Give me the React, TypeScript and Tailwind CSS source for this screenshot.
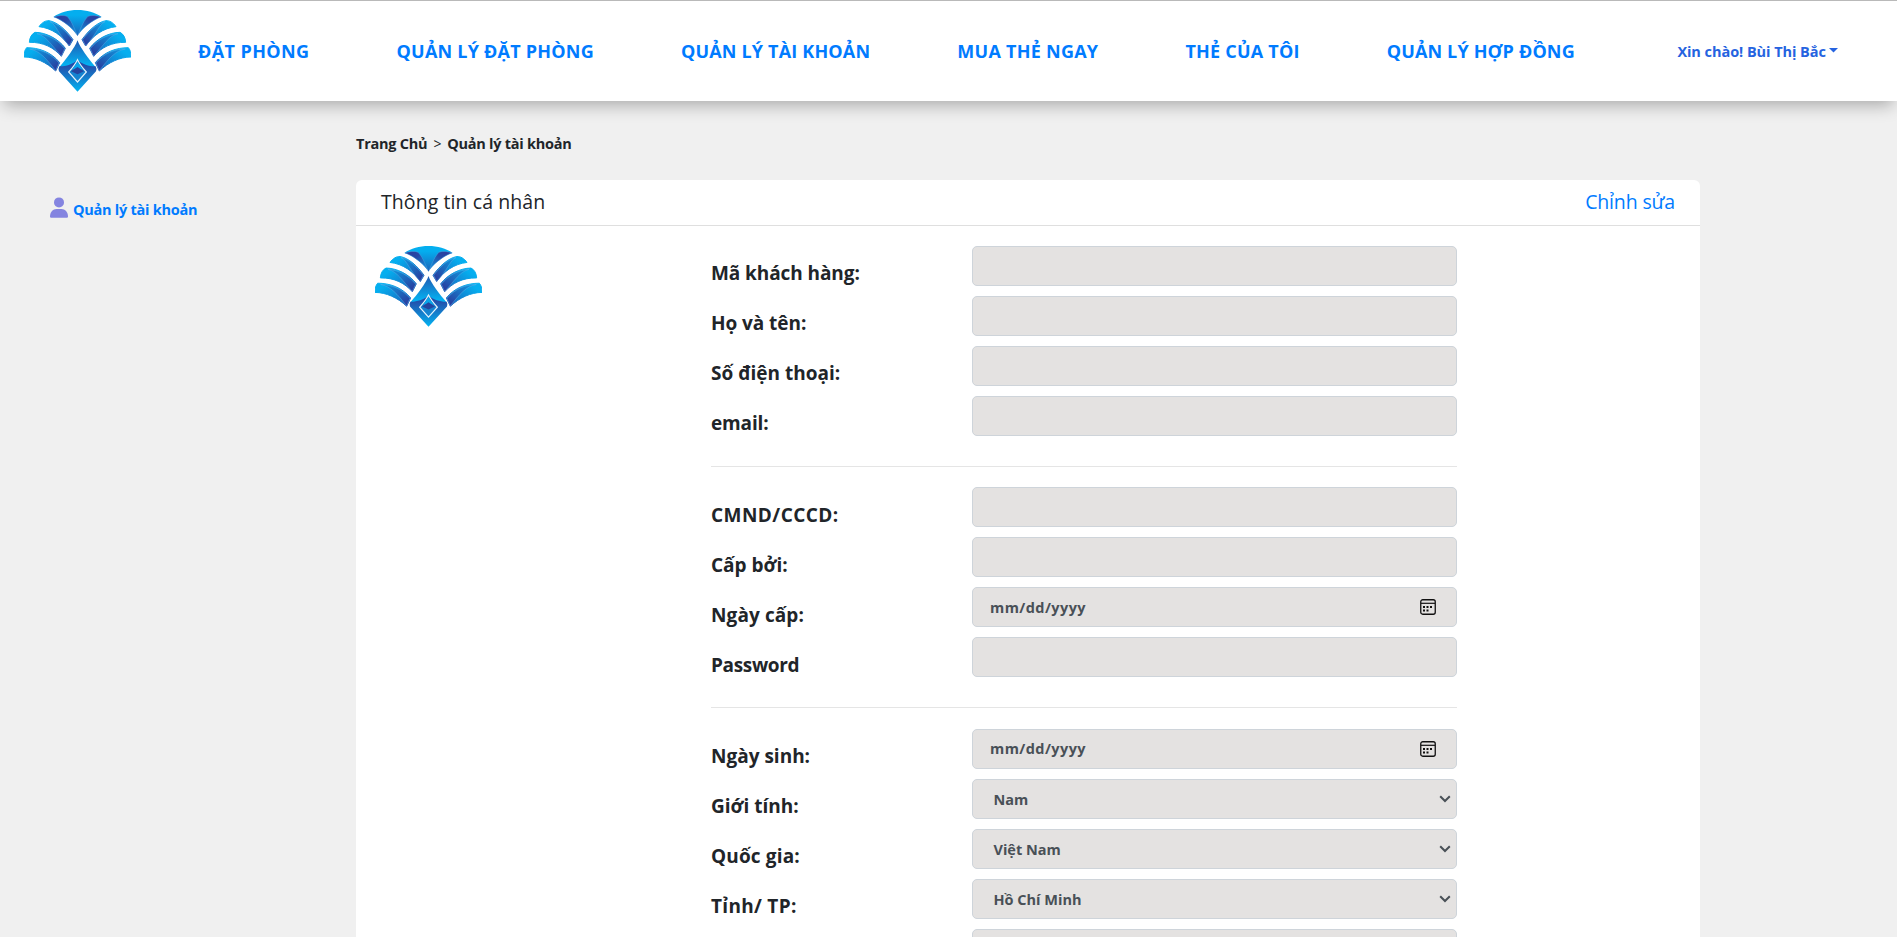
import clsx from "clsx";

const BLADES = [
  "M72 80 C80 68 92 61 102 62 C128 66 155 92 174 119 L163 138 C142 107 110 84 72 80Z",
  "M43 127 C44 112 50 102 60 97 C92 97 130 116 151 145 L139 169 C117 143 85 126 43 127Z",
  "M27 171 C27 158 29 150 35 143 C70 143 108 155 134 188 L122 213 C95 187 60 171 27 171Z",
];

const BLADE_SHADES = [
  "M105 65 C124 74 130 104 163 137 L172 119 C152 92 128 70 105 65Z",
  "M66 101 C94 108 108 134 139 168 L149 146 C128 119 98 103 66 101Z",
  "M44 147 C74 152 94 176 122 212 L132 189 C108 160 76 147 44 147Z",
];

function Wing() {
  return (
    <g>
      <path
        d="M117 51 C130 46 148 45 156 49 C167 60 177 80 185 103 C172 84 143 60 117 51Z"
        fill="url(#indigo)"
        stroke="#5fa6e2"
        strokeWidth="1.2"
      />
      {BLADES.map((d) => (
        <path key={d} d={d} fill="url(#blade)" stroke="url(#blade)" strokeWidth="3" strokeLinejoin="round" />
      ))}
      {BLADE_SHADES.map((d) => (
        <path key={d} d={d} fill="url(#shade)" stroke="#6db4ea" strokeWidth="1.2" />
      ))}
    </g>
  );
}

function Logo({ height = 82 }: { height?: number }) {
  return (
    <svg
      width="107"
      height={height}
      viewBox="27 30 321 246"
      preserveAspectRatio="none"
      className="shrink-0"
      aria-hidden="true"
    >
      <defs>
        <linearGradient id="crown" x1="0" y1="0" x2="0" y2="1">
          <stop offset="0.2" stopColor="#04aeef" />
          <stop offset="1" stopColor="#1b63b9" />
        </linearGradient>
        <linearGradient id="indigo" x1="0" y1="0" x2="1" y2="1">
          <stop offset="0" stopColor="#2c3a9b" />
          <stop offset="0.4" stopColor="#2648a6" />
          <stop offset="0.8" stopColor="#1581cf" />
        </linearGradient>
        <linearGradient id="blade" x1="0" y1="0" x2="1" y2="0.9">
          <stop offset="0.2" stopColor="#05aeef" />
          <stop offset="1" stopColor="#1d5fb8" />
        </linearGradient>
        <linearGradient id="shade" x1="0" y1="0" x2="0.9" y2="1">
          <stop offset="0" stopColor="#0b9ce2" />
          <stop offset="0.5" stopColor="#1b6dc0" />
          <stop offset="1" stopColor="#2a389b" />
        </linearGradient>
        <linearGradient id="peak" x1="0" y1="0" x2="0" y2="1">
          <stop offset="0" stopColor="#2059b2" />
          <stop offset="0.6" stopColor="#05aeef" />
        </linearGradient>
        <linearGradient id="base" x1="0" y1="0" x2="0" y2="1">
          <stop offset="0.1" stopColor="#2745a4" />
          <stop offset="1" stopColor="#02b4f2" />
        </linearGradient>
      </defs>
      <path
        d="M115 51 C135 37 160 30 187.500 30 C215 30 240 37 260 51 C232 60 200 85 187.500 108 C175 85 143 60 115 51Z"
        fill="url(#crown)"
      />
      <Wing />
      <g transform="translate(375 0) scale(-1 1)">
        <Wing />
      </g>
      <path d="M187.500 121 C195 143 222 178 241 200 L187.500 240 L134 200 C153 178 180 143 187.500 121Z" fill="url(#peak)" />
      <path
        d="M133 199 C150 200 173 193 187.500 180 C202 193 225 200 242 199 Q246 206 243 214 L187.500 275 L132 214 Q129 206 133 199Z"
        fill="url(#base)"
      />
      <path
        d="M187.500 179 C194 193 204 205 214 216 L187.500 246 L161 216 C171 205 181 193 187.500 179Z"
        fill="#1583d0"
        stroke="#e4f3fc"
        strokeWidth="3.500"
      />
      <path d="M187.500 185 L203 208 L172 208Z" fill="#08a5ea" />
      <path d="M187.500 201 L207 214 L187.500 223 L168 214Z" fill="#25459f" />
    </svg>
  );
}

const NAV = [
  { label: "ĐẶT PHÒNG", tracking: "tracking-[0.4px]" },
  { label: "QUẢN LÝ ĐẶT PHÒNG", tracking: "tracking-[0.22px]" },
  { label: "QUẢN LÝ TÀI KHOẢN", tracking: "tracking-[0.18px]" },
  { label: "MUA THẺ NGAY", tracking: "tracking-[0.26px]" },
  { label: "THẺ CỦA TÔI", tracking: "tracking-[0.22px]" },
  { label: "QUẢN LÝ HỢP ĐỒNG", tracking: "tracking-[0.16px]" },
];

function Header() {
  return (
    <header className="flex h-[101px] items-center border-t border-[#b9b9b9] bg-white pl-6 shadow-[0_8px_16px_-4px_rgba(0,0,0,0.3)]">
      <Logo />
      <nav className="ml-[67px] flex gap-[87px] text-[18px] leading-6 font-bold whitespace-nowrap text-[#007bff]">
        {NAV.map((item) => (
          <a key={item.label} href="#" className={item.tracking}>
            {item.label}
          </a>
        ))}
      </nav>
      <button className="ml-[102.5px] flex items-center gap-[3px] pt-0.5 text-[14.5px] leading-6 font-bold tracking-[-0.05px] whitespace-nowrap text-[#2563e0]">
        Xin chào! Bùi Thị Bắc
        <svg width="9" height="5" viewBox="0 0 9 5" className="mb-1" fill="currentColor" aria-hidden="true">
          <path d="M0 0H9L4.500 4.500Z" />
        </svg>
      </button>
    </header>
  );
}

function PersonIcon() {
  return (
    <svg width="18" height="21" viewBox="0 0 18 21" fill="#8484e0" aria-hidden="true">
      <circle cx="9" cy="5.400" r="5" />
      <path d="M0 19.500C0 15 3 12 6.500 12H11.500C15 12 18 15 18 19.500Q18 20.700 16.800 20.700H1.200Q0 20.700 0 19.500Z" />
    </svg>
  );
}

function CalendarIcon() {
  return (
    <svg width="16" height="16" viewBox="0 0 16 16" fill="none" aria-hidden="true">
      <rect x="0.750" y="0.750" width="14.500" height="14.500" rx="2" stroke="#111" strokeWidth="1.300" />
      <path d="M1 4.300H15" stroke="#111" strokeWidth="1.200" />
      <path d="M3 7h2v2h-2zM6.500 7h2v2h-2zM10 7h2v2h-2zM3 10.500h2v2h-2zM6.500 10.500h2v2h-2z" fill="#111" />
    </svg>
  );
}

function ChevronIcon() {
  return (
    <svg width="12" height="8" viewBox="0 0 12 8" fill="none" stroke="#495057" strokeWidth="2" aria-hidden="true">
      <path d="M1.200 1.200L6 6L10.800 1.200" />
    </svg>
  );
}

type Field = {
  id: string;
  label?: string;
  kind?: "text" | "date" | "select";
  value?: string;
  tracking?: string;
};

const GROUPS: Field[][] = [
  [
    { id: "code", label: "Mã khách hàng:", tracking: "tracking-[-0.08px]" },
    { id: "name", label: "Họ và tên:", tracking: "tracking-[-0.06px]" },
    { id: "phone", label: "Số điện thoại:" },
    { id: "email", label: "email:", tracking: "tracking-[-0.15px]" },
  ],
  [
    { id: "idcard", label: "CMND/CCCD:", tracking: "tracking-[0.45px]" },
    { id: "issuer", label: "Cấp bởi:" },
    { id: "issued", label: "Ngày cấp:", kind: "date", tracking: "tracking-[0.1px]" },
    { id: "password", label: "Password", tracking: "tracking-[-0.35px]" },
  ],
  [
    { id: "birthday", label: "Ngày sinh:", kind: "date" },
    { id: "gender", label: "Giới tính:", kind: "select", value: "Nam" },
    { id: "country", label: "Quốc gia:", kind: "select", value: "Việt Nam", tracking: "tracking-[0.15px]" },
    { id: "province", label: "Tỉnh/ TP:", kind: "select", value: "Hồ Chí Minh", tracking: "tracking-[0.3px]" },
    { id: "district", kind: "select" },
  ],
];

function FieldRow({ label, kind = "text", value = "", tracking, lowered }: Field & { lowered: boolean }) {
  return (
    <div className="flex h-[50px]">
      <label
        className={clsx(
          "w-[261px] text-[19px] leading-7 font-bold whitespace-nowrap",
          lowered ? "pt-[13.5px]" : "pt-[12.5px]",
          tracking,
        )}
      >
        {label}
      </label>
      <div
        className={clsx(
          "flex h-10 flex-1 items-center justify-between rounded-[5px] border border-[#ced4da] bg-[#e4e2e1] text-[14.5px] font-bold text-[#495057]",
          kind === "date" && "pr-5 pb-px pl-[17px] tracking-[0.42px]",
          kind === "select" && "pr-[5px] pl-[20.5px]",
        )}
      >
        <span className={clsx("leading-6", (kind === "select" || lowered) && "pt-0.5")}>
          {kind === "date" ? "mm/dd/yyyy" : value}
        </span>
        {kind === "date" && <CalendarIcon />}
        {kind === "select" && <ChevronIcon />}
      </div>
    </div>
  );
}

export default function App() {
  return (
    <div className="h-[937px] overflow-hidden bg-[#f0f0f0] font-['Open_Sans','Noto_Sans',sans-serif] text-[#212529]">
      <Header />
      <div className="flex">
        <aside className="w-[356px] pt-[96px] pl-[50px]">
          <a href="#" className="flex items-start gap-[5px] text-[14.5px] leading-6 font-bold tracking-[-0.25px] text-[#007bff]">
            <PersonIcon />
            <span className="pt-px">Quản lý tài khoản</span>
          </a>
        </aside>
        <main className="w-[1344px] pt-[31px]">
          <div className="flex h-6 gap-[6px] text-[14.5px] leading-6 font-bold tracking-[-0.24px]">
            <span>Trang Chủ</span>
            <span className="text-[14px] font-normal">&gt;</span>
            <span>Quản lý tài khoản</span>
          </div>
          <section className="mt-6 h-[900px] rounded-md bg-white">
            <div className="flex h-[46px] items-center justify-between border-b border-[#dfdfdf] px-[25px] pb-px text-[19.5px] leading-7">
              <h2 className="tracking-[0.08px]">Thông tin cá nhân</h2>
              <a href="#" className="tracking-[-0.15px] text-[#007bff]">
                Chỉnh sửa
              </a>
            </div>
            <div className="flex pt-5 pl-[19px]">
              <Logo height={81} />
              <form className="ml-[229px] w-[746px]">
                {GROUPS.map((group, i) => (
                  <div key={group[0].id}>
                    {i > 0 && <hr className={clsx("mt-5 border-[#e5e5e5]", i === 1 ? "mb-5" : "mb-[21px]")} />}
                    {group.map((field) => (
                      <FieldRow key={field.id} lowered={i === 1} {...field} />
                    ))}
                  </div>
                ))}
              </form>
            </div>
          </section>
        </main>
      </div>
    </div>
  );
}
